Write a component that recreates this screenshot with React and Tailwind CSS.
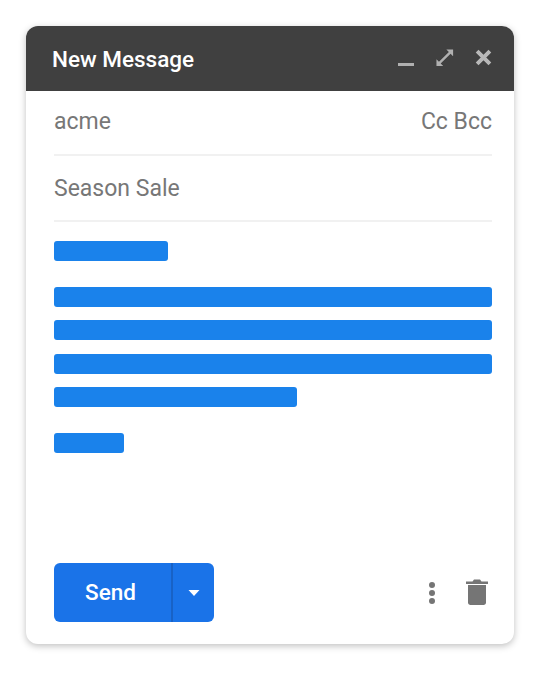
export default function App() {
  return (
    <div className="w-[550px] h-[680px] bg-white pt-[26px] pl-[26px] font-['Roboto',sans-serif] antialiased">
      <div className="w-[488px] h-[618px] bg-white rounded-[12px] shadow-[0_2px_7px_rgba(0,0,0,0.25)] flex flex-col overflow-hidden">
        <div className="h-[65px] shrink-0 bg-[#404040] flex items-center justify-between pl-[26px] pr-[22px]">
          <span className="text-white text-[22.5px] font-medium leading-none mt-[1px]">New Message</span>
          <div className="flex items-center">
            <svg width="18" height="20" viewBox="0 0 18 20" className="mr-[21px]"><rect x="1" y="14" width="16" height="3" fill="#b0b0b0" /></svg>
            <svg width="18" height="18" viewBox="0 0 20 20" className="mr-[21px] mb-[2px]" fill="#b0b0b0">
              <path d="M11.5 0.5H19V8L16.2 5.2L5.2 16.2L8 19H0.5V11.5L3.3 14.3L14.3 3.3Z" />
            </svg>
            <svg width="17" height="17" viewBox="0 0 20 20" className="mb-[2px]" fill="none" stroke="#b8b8b8" strokeWidth="4.6"><path d="M2.5 2.5L17.5 17.5M17.5 2.5L2.5 17.5" /></svg>
          </div>
        </div>
        <div className="px-[28px] pr-[22px] flex flex-col flex-1">
          <div className="h-[65px] shrink-0 border-b-2 border-[#f1f1f1] flex items-center justify-between pb-[1px] text-[23px] font-normal text-[#777777]">
            <span>acme</span>
            <span>Cc Bcc</span>
          </div>
          <div className="h-[66px] shrink-0 border-b-2 border-[#f1f1f1] flex items-center pt-[2px] text-[23px] font-normal text-[#777777]">
            <span>Season Sale</span>
          </div>
          <div className="flex flex-col mt-[19px]">
            <div className="h-5 w-[114px] rounded-[3px] bg-[#1a82eb]" />
            <div className="h-5 mt-[26px] rounded-[3px] bg-[#1a82eb]" />
            <div className="h-5 mt-[13.4px] rounded-[3px] bg-[#1a82eb]" />
            <div className="h-5 mt-[13.4px] rounded-[3px] bg-[#1a82eb]" />
            <div className="h-5 w-[243px] mt-[13.4px] rounded-[3px] bg-[#1a82eb]" />
            <div className="h-5 w-[70px] mt-[26px] rounded-[3px] bg-[#1a82eb]" />
          </div>
          <div className="mt-auto mb-[22px] flex items-center justify-between">
            <div className="w-[160px] h-[59px] rounded-[6px] bg-[#1a73e8] flex text-white">
              <div className="w-[119px] border-r-2 border-[#1862c6] flex items-center justify-center text-[22.5px] font-medium pr-[4px]">Send</div>
              <div className="flex-1 flex items-center justify-center">
                <svg width="12" height="6" viewBox="0 0 12 6"><path d="M0.5 0H11.5L6 6Z" fill="#fff" /></svg>
              </div>
            </div>
            <div className="flex items-center">
              <svg width="8" height="24" viewBox="0 0 8 24" fill="#757575" className="mr-[30px]">
                <circle cx="4" cy="4" r="3" /><circle cx="4" cy="12" r="3" /><circle cx="4" cy="20" r="3" />
              </svg>
              <svg width="22" height="28" viewBox="0 0 22 28" fill="#757575" className="mr-[4px] mb-[2px]">
                <path d="M0 3.5H6.5L8 1.5H14L15.5 3.5H22V6H0Z" />
                <path d="M2 7H20V24.5C20 26 19 27 17.5 27H4.5C3 27 2 26 2 24.5Z" />
              </svg>
            </div>
          </div>
        </div>
      </div>
    </div>
  );
}
